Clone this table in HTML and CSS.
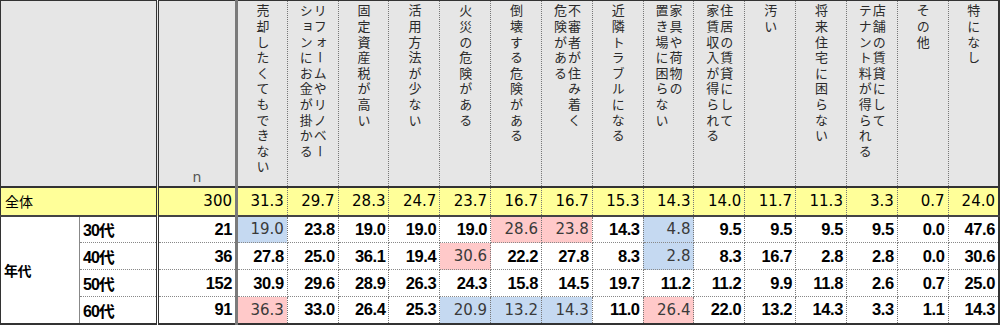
FILE: index.html
```html
<!DOCTYPE html>
<html lang="ja">
<head>
<meta charset="utf-8">
<link rel="stylesheet" href="styles.css">
</head>
<body>
<table class="tbl">
  <colgroup>
    <col class="c-a"><col class="c-b"><col class="c-n">
    <col><col><col><col><col><col><col><col><col><col><col><col><col><col><col>
  </colgroup>
  <thead>
    <tr class="hrow">
      <th class="corner" colspan="2"></th>
      <th class="ncell">n</th>
      <th class="q first"><div class="vt">売却したくてもできない</div></th>
      <th class="q"><div class="vt">リフォームやリノベー<br>ションにお金が掛かる</div></th>
      <th class="q"><div class="vt">固定資産税が高い</div></th>
      <th class="q"><div class="vt">活用方法が少ない</div></th>
      <th class="q"><div class="vt">火災の危険がある</div></th>
      <th class="q"><div class="vt">倒壊する危険がある</div></th>
      <th class="q"><div class="vt">不審者が住み着く<br>危険がある</div></th>
      <th class="q"><div class="vt">近隣トラブルになる</div></th>
      <th class="q"><div class="vt">家具や荷物の<br>置き場に困らない</div></th>
      <th class="q"><div class="vt">住居の賃貸にして<br>家賃収入が得られる</div></th>
      <th class="q"><div class="vt">汚い</div></th>
      <th class="q"><div class="vt">将来住宅に困らない</div></th>
      <th class="q"><div class="vt">店舗の賃貸にして<br>テナント料が得られる</div></th>
      <th class="q"><div class="vt">その他</div></th>
      <th class="q last"><div class="vt">特になし</div></th>
    </tr>
  </thead>
  <tbody>
    <tr class="total">
      <td class="lbl-total" colspan="2">全体</td>
      <td class="n">300</td>
      <td class="v first">31.3</td><td class="v">29.7</td><td class="v">28.3</td><td class="v">24.7</td><td class="v">23.7</td>
      <td class="v">16.7</td><td class="v">16.7</td><td class="v">15.3</td><td class="v">14.3</td><td class="v">14.0</td>
      <td class="v">11.7</td><td class="v">11.3</td><td class="v">3.3</td><td class="v">0.7</td><td class="v last">24.0</td>
    </tr>
    <tr class="row">
      <td class="grp" rowspan="4">年代</td>
      <td class="sub">30代</td>
      <td class="n">21</td>
      <td class="v first lo">19.0</td><td class="v">23.8</td><td class="v">19.0</td><td class="v">19.0</td><td class="v">19.0</td>
      <td class="v hi">28.6</td><td class="v hi">23.8</td><td class="v">14.3</td><td class="v lo">4.8</td><td class="v">9.5</td>
      <td class="v">9.5</td><td class="v">9.5</td><td class="v">9.5</td><td class="v">0.0</td><td class="v last">47.6</td>
    </tr>
    <tr class="row">
      <td class="sub">40代</td>
      <td class="n">36</td>
      <td class="v first">27.8</td><td class="v">25.0</td><td class="v">36.1</td><td class="v">19.4</td><td class="v hi">30.6</td>
      <td class="v">22.2</td><td class="v">27.8</td><td class="v">8.3</td><td class="v lo">2.8</td><td class="v">8.3</td>
      <td class="v">16.7</td><td class="v">2.8</td><td class="v">2.8</td><td class="v">0.0</td><td class="v last">30.6</td>
    </tr>
    <tr class="row">
      <td class="sub">50代</td>
      <td class="n">152</td>
      <td class="v first">30.9</td><td class="v">29.6</td><td class="v">28.9</td><td class="v">26.3</td><td class="v">24.3</td>
      <td class="v">15.8</td><td class="v">14.5</td><td class="v">19.7</td><td class="v">11.2</td><td class="v">11.2</td>
      <td class="v">9.9</td><td class="v">11.8</td><td class="v">2.6</td><td class="v">0.7</td><td class="v last">25.0</td>
    </tr>
    <tr class="row lastrow">
      <td class="sub">60代</td>
      <td class="n">91</td>
      <td class="v first hi">36.3</td><td class="v">33.0</td><td class="v">26.4</td><td class="v">25.3</td><td class="v lo">20.9</td>
      <td class="v lo">13.2</td><td class="v lo">14.3</td><td class="v">11.0</td><td class="v hi">26.4</td><td class="v">22.0</td>
      <td class="v">13.2</td><td class="v">14.3</td><td class="v">3.3</td><td class="v">1.1</td><td class="v last">14.3</td>
    </tr>
  </tbody>
</table>
</body>
</html>
```

FILE: styles.css
```css
html, body {
  margin: 0;
  padding: 0;
  background: #ffffff;
}

.tbl {
  width: 1000px;
  table-layout: fixed;
  border-collapse: collapse;
  font-family: "Liberation Sans", "Noto Sans CJK JP", sans-serif;
  color: #000;
}

.c-a { width: 79px; }
.c-b { width: 78px; }
.c-n { width: 79px; }

.tbl th,
.tbl td {
  padding: 0;
  margin: 0;
}

/* header */
.hrow {
  height: 186px;
}
.hrow th {
  background: #e6e6e6;
  border-top: 1px solid #333;
  border-bottom: 2px solid #333;
  font-weight: normal;
}
.corner {
  border-left: 1px solid #333;
  border-right: 3px double #333;
}
.ncell {
  vertical-align: bottom;
  text-align: center;
  font-family: "DejaVu Sans", sans-serif;
  font-size: 14px;
  color: #555;
  padding-bottom: 1px !important;
  border-right: 3px solid #7a7a7a;
}
.q {
  vertical-align: top;
  border-left: 1px dotted #777;
  border-right: 1px dotted #777;
}
.q.first { border-left: 3px solid #7a7a7a; }
.q.last { border-right: 2px solid #333; }

.vt {
  writing-mode: vertical-rl;
  font-family: "Noto Sans CJK JP", sans-serif;
  font-size: 13px;
  line-height: 14px;
  letter-spacing: 2.6px;
  color: #2a2a2a;
  margin: 3px auto 0;
  height: 178px;
  text-align: start;
}

/* total row */
.total {
  height: 29px;
}
.total td {
  background: #ffff99;
  border-bottom: 2px solid #444;
  font-family: "DejaVu Sans", sans-serif;
  font-size: 15px;
  text-align: right;
  padding-right: 3px;
}
.total .lbl-total {
  text-align: left;
  padding-left: 4px;
  padding-right: 0;
  font-family: "Noto Sans CJK JP", sans-serif;
  font-size: 14px;
  border-left: 1px solid #333;
  border-right: 3px double #333;
}
.total .n { border-right: 3px solid #7a7a7a; }
.total .v {
  border-left: 1px dotted #777;
  border-right: 1px dotted #777;
}
.total .v.first { border-left: 3px solid #7a7a7a; }
.total .v.last { border-right: 2px solid #333; }

/* data rows */
.row {
  height: 27px;
}
.row td {
  border-bottom: 1px dotted #888;
  font-size: 16.5px;
  font-weight: bold;
  letter-spacing: -0.4px;
  text-align: right;
  padding-right: 3px;
}
.row.lastrow td { border-bottom: 2px solid #333; }

.row .grp {
  text-align: left;
  padding-left: 3px;
  padding-right: 0;
  font-family: "Noto Sans CJK JP", sans-serif;
  font-size: 14px;
  letter-spacing: -0.5px;
  vertical-align: middle;
  border-left: 1px solid #333;
  border-right: 1px solid #888;
  border-bottom: 2px solid #333;
}
.row .sub {
  text-align: left;
  padding-left: 3px;
  padding-right: 0;
  font-size: 16px;
  letter-spacing: -1px;
  border-right: 3px double #333;
}
.row .n { border-right: 3px solid #7a7a7a; }
.row .v {
  border-left: 1px dotted #777;
  border-right: 1px dotted #777;
}
.row .v.first { border-left: 3px solid #7a7a7a; }
.row .v.last { border-right: 2px solid #333; }

.row .v.lo,
.row .v.hi {
  font-family: "DejaVu Sans", sans-serif;
  font-size: 15px;
  font-weight: normal;
  letter-spacing: 0;
  color: #3a3a3a;
}
.v.lo { background: #c5d9f1; }
.v.hi { background: #ffc9c9; }
```
